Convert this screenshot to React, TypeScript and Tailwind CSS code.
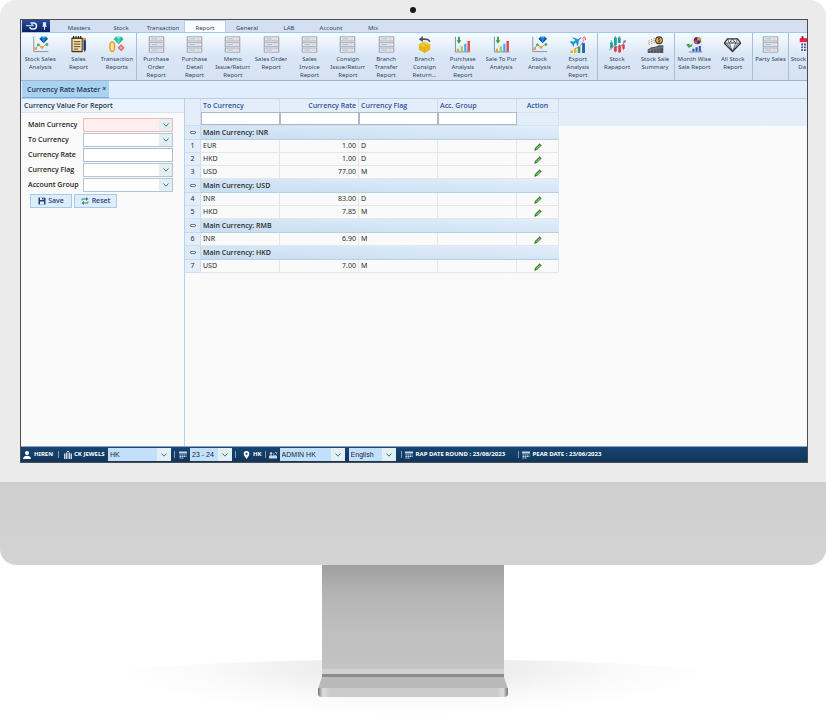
import React, { useState } from 'react';

type IconName =
  | 'stockSales'
  | 'notepad'
  | 'gems'
  | 'list'
  | 'box'
  | 'bars'
  | 'plane'
  | 'candles'
  | 'coins'
  | 'month'
  | 'diamond'
  | 'calendar';

interface ToolItem {
  label: string;
  icon: IconName;
}

const menus = ['Masters', 'Stock', 'Transaction', 'Report', 'General', 'LAB', 'Account', 'Mix'];

const toolGroups: { width: string; items: ToolItem[] }[] = [
  {
    width: 'w-[116px]',
    items: [
      { label: 'Stock Sales\nAnalysis', icon: 'stockSales' },
      { label: 'Sales\nReport', icon: 'notepad' },
      { label: 'Transaction\nReports', icon: 'gems' },
    ],
  },
  {
    width: 'w-[461px]',
    items: [
      { label: 'Purchase\nOrder\nReport', icon: 'list' },
      { label: 'Purchase\nDetail\nReport', icon: 'list' },
      { label: 'Memo\nIssue/Return\nReport', icon: 'list' },
      { label: 'Sales Order\nReport', icon: 'list' },
      { label: 'Sales\nInvoice\nReport', icon: 'list' },
      { label: 'Consign\nIssue/Return\nReport', icon: 'list' },
      { label: 'Branch\nTransfer\nReport', icon: 'list' },
      { label: 'Branch\nConsign\nReturn...', icon: 'box' },
      { label: 'Purchase\nAnalysis\nReport', icon: 'bars' },
      { label: 'Sale To Pur\nAnalysis', icon: 'bars' },
      { label: 'Stock\nAnalysis', icon: 'stockSales' },
      { label: 'Export\nAnalysis\nReport', icon: 'plane' },
    ],
  },
  {
    width: 'w-[77px]',
    items: [
      { label: 'Stock\nRapaport', icon: 'candles' },
      { label: 'Stock Sale\nSummary', icon: 'coins' },
    ],
  },
  {
    width: 'w-[78px]',
    items: [
      { label: 'Month Wise\nSale Report', icon: 'month' },
      { label: 'All Stock\nReport', icon: 'diamond' },
    ],
  },
  { width: 'w-[36px]', items: [{ label: 'Party Sales', icon: 'list' }] },
];

const rateGroups = [
  {
    currency: 'INR',
    rows: [
      { id: 1, to: 'EUR', rate: '1.00', flag: 'D' },
      { id: 2, to: 'HKD', rate: '1.00', flag: 'D' },
      { id: 3, to: 'USD', rate: '77.00', flag: 'M' },
    ],
  },
  {
    currency: 'USD',
    rows: [
      { id: 4, to: 'INR', rate: '83.00', flag: 'D' },
      { id: 5, to: 'HKD', rate: '7.85', flag: 'M' },
    ],
  },
  { currency: 'RMB', rows: [{ id: 6, to: 'INR', rate: '6.90', flag: 'M' }] },
  { currency: 'HKD', rows: [{ id: 7, to: 'USD', rate: '7.00', flag: 'M' }] },
];

const iconShapes: Record<IconName, React.ReactNode> = {
  stockSales: (
    <>
      <path d="M2.5 1v21H23" stroke="#7b899b" strokeWidth="1.2" fill="none" />
      <path d="M5 18l4-6 5 4 6-4" stroke="#8a97a8" strokeWidth="1.2" fill="none" />
      <circle cx="5" cy="18" r="2" fill="#f59a23" />
      <circle cx="9" cy="12.500" r="2" fill="#4caf50" />
      <circle cx="14" cy="16" r="2" fill="#f59a23" />
      <circle cx="21" cy="12" r="2" fill="#4caf50" />
      <path d="M13 1h7l2.500 3-6 6-6-6z" fill="#1565c0" />
      <path d="M13 1h7l-3.500 3z" fill="#29b6f6" />
      <path d="M10.500 4h12l-6 6z" fill="#0b4f9e" />
      <path d="M14 4h5l-2.500 6z" fill="#1e88e5" />
    </>
  ),
  notepad: (
    <>
      <rect x="2" y="2" width="16" height="21" rx="1" fill="#4a3419" />
      <rect x="3.500" y="4" width="13" height="17" fill="#f7dfa5" />
      <path d="M5 0v4M8.500 0v4M12 0v4M15 0v4" stroke="#222" strokeWidth="1.6" />
      <path d="M5.500 8h9M5.500 11.500h9M5.500 15h9M5.500 18.500h6" stroke="#4b3a20" strokeWidth="1.3" />
      <path d="M19 3h3.500v16l-1.700 4L19 19z" fill="#1e3a6e" />
      <path d="M19 3h3.500v3H19z" fill="#e29a2f" />
    </>
  ),
  gems: (
    <>
      <path d="M11 1h8l3 3.500-7 7-7-7z" fill="#25b99a" />
      <path d="M11 1h8l-4 3.500z" fill="#7fe3cd" />
      <path d="M12 4.500h6l-3 7z" fill="#4fd0b2" />
      <ellipse cx="6" cy="15" rx="4.500" ry="8" fill="#eda02f" />
      <ellipse cx="6" cy="15" rx="2.200" ry="5.500" fill="#ffe9ae" />
      <path d="M18.500 11.500l5 5-5 5-5-5z" fill="#e8606a" />
      <path d="M18.500 14l2.500 2.500-2.500 2.500-2.500-2.500z" fill="#f9a8ae" />
    </>
  ),
  list: (
    <>
      <path d="M1.500 1v22M22.500 1v22" stroke="#b3bac4" strokeWidth="1.300" />
      {[1, 9, 17].map(y => (
        <g key={y}>
          <rect x="2" y={y} width="20" height="6" fill="#e0e5ec" stroke="#a3abb6" strokeWidth="1.200" />
          <path d={`M5 ${y + 3}h8`} stroke="#a9b3bf" strokeWidth="1.200" />
          <circle cx="17.500" cy={y + 3} r="1.800" fill="#f5cfca" />
        </g>
      ))}
    </>
  ),
  box: (
    <>
      <path d="M12 8l8 3.500v8L12 24l-8-4.500v-8z" fill="#e9b91b" />
      <path d="M12 8l8 3.500-8 4-8-4z" fill="#f2cb3c" />
      <path d="M12 15.500V24M8 10l8 4" stroke="#d8a712" strokeWidth="1" />
      <path d="M19 8.500C19 5 16 4 8 4.500" stroke="#4b4f57" strokeWidth="2.200" fill="none" />
      <path d="M9.500 0v8.500L4 4.500z" fill="#4b4f57" />
    </>
  ),
  bars: (
    <>
      <path d="M2 1v21.500h21" stroke="#5f8a8b" strokeWidth="1.2" fill="none" />
      <path d="M7 1v6" stroke="#2e9e3f" strokeWidth="2.500" />
      <path d="M3.800 6h6.400L7 11z" fill="#2e9e3f" />
      <path d="M4 18h3v4H4z" fill="#f59a23" />
      <path d="M9.500 14.500h3V22h-3z" fill="#9ccc65" />
      <path d="M14.500 11h3v11h-3z" fill="#42a5f5" />
      <path d="M19 7h3.500v15H19z" fill="#e5484d" />
    </>
  ),
  plane: (
    <>
      <path d="M1 8l3-1 2 1 3-2-5-4h2l7 2.500L16 2l1.500-.3-.6 1.600-3 3L13 13l-1.500 1-1.500-5-3 2.500V14l-1 1-1.500-3.500z" fill="#2196d9" />
      <path d="M8 18c7-2 11-6 13.500-14" stroke="#e5606a" strokeWidth="1.300" fill="none" />
      <path d="M18.500 4.500L22 1l2 5" stroke="#e5484d" strokeWidth="1.300" fill="none" />
      <path d="M2 20.500h3.500V24H2z" fill="#e8b21c" />
      <path d="M7 18.500h3.500V24H7z" fill="#f2b425" />
      <path d="M12.500 15h3.500v9h-3.500z" fill="#43a047" />
      <path d="M18.500 10h4v14h-4z" fill="#1e63b5" />
    </>
  ),
  candles: (
    <>
      <path d="M3.500 6v13M9 0v17M14.500 0v10" stroke="#12a594" strokeWidth="1" />
      <path d="M1.500 9h4v8h-4zM7 2h4v11H7zM12.500 2h4v8h-4z" fill="#20a392" />
      <path d="M9 14v9M15 12v12M20.500 8v12" stroke="#d93644" strokeWidth="1" />
      <path d="M7 15h4v7H7zM13 13h4v10h-4zM18.700 12h3.500v6h-3.500z" fill="#e23b49" />
      <path d="M0 20l8-7 6 4 9-9" stroke="#8593a5" strokeWidth="1.4" fill="none" />
      <path d="M19.500 7l4.500-1.500-1 4.500z" fill="#717d8e" />
    </>
  ),
  coins: (
    <>
      <circle cx="17" cy="6" r="5.500" fill="#3b3b3b" />
      <circle cx="17" cy="6" r="4" fill="#f2b544" />
      <path d="M18.500 4c-2.500-1.500-4 1-1.500 2s1.500 3.500-1.500 2M17 2.500v7" stroke="#333" strokeWidth="0.9" fill="none" />
      <path d="M3 6v7M6.500 4.500v7M10 3v7" stroke="#b98a45" strokeWidth="1.600" strokeDasharray="1.500 1" />
      <path d="M1 24v-5l5-3 6-1 5-2 6 0v11z" fill="#55575c" />
      <path d="M1 21l8-3 6-1 8-1M5 18v6M9 17v7M13 16v8M17 15v9" stroke="#92959b" strokeWidth="0.800" fill="none" />
    </>
  ),
  month: (
    <>
      <path d="M8 1h15v22H8z" fill="#dfe7f5" />
      <circle cx="16" cy="6.500" r="5" fill="#243f7d" />
      <path d="M16 6.500v-5a5 5 0 0 1 5 5z" fill="#f59a23" />
      <path d="M16 6.500h-5a5 5 0 0 0 5 5z" fill="#e5484d" />
      <path d="M9 18h3v4H9zM13.500 16h3v6h-3zM18 14h3v8h-3z" fill="#285bb0" />
      <path d="M0 12l5-1v2c2 0 3-1 4-3 0 4-1 6-4 6v2z" fill="#43a047" />
      <path d="M4 22.500h19" stroke="#5f74a2" strokeWidth="1.200" />
    </>
  ),
  diamond: (
    <>
      <path d="M5 4h14l4.500 6L12 22 .5 10z" fill="#f4f7fa" stroke="#2d3035" strokeWidth="1.800" />
      <path d="M.5 10h23M5 4l2.500 6L12 22l4.500-12L19 4M7.500 10L12 4l4.500 6M4 10l8 12 8-12M9 7l3 3 3-3" stroke="#33363b" strokeWidth="1" fill="none" />
    </>
  ),
  calendar: (
    <>
      <path d="M1 3h22v6H1z" fill="#e5283c" />
      <path d="M5 0v5M19 0v5" stroke="#b51023" strokeWidth="2.500" />
      <path d="M1 9h22v13H1z" fill="#f4f6fb" />
      <path d="M3 12h18M3 16h18M3 20h18" stroke="#33509c" strokeWidth="2.500" strokeDasharray="2.600 1.400" />
    </>
  ),
};

const ToolIcon: React.FC<{ name: IconName }> = ({ name }) => (
  <svg viewBox="0 0 24 24" className="h-[17px] w-[17px] shrink-0" aria-hidden="true">
    {iconShapes[name]}
  </svg>
);

const Chevron: React.FC = () => (
  <svg viewBox="0 0 8 8" className="h-2 w-2" aria-hidden="true">
    <path d="M1.500 2.500L4 5.200l2.500-2.700" fill="none" stroke="#5a6b79" strokeWidth="1" />
  </svg>
);

const Ribbon: React.FC = () => {
  const [active, setActive] = useState('Report');

  return (
    <header>
      <nav className="flex h-[13px] border-b border-[#9fc8ef] bg-[#d4e0f1]">
        <button aria-label="Home" className="mr-2 ml-px flex w-7 items-center justify-center gap-1 bg-linear-to-b from-[#2b4c9b] to-[#0b2064]">
          <svg viewBox="0 0 24 16" className="h-2 w-3" aria-hidden="true">
            <path d="M9 2h6c8 0 8 12 0 12h-3c-3 0-4-2-4-4" fill="none" stroke="#e6efff" strokeWidth="3" />
            <path d="M0 7h13M11 4l4 4" stroke="#b4ccf4" strokeWidth="2.500" />
          </svg>
          <svg viewBox="0 0 8 12" className="h-2 w-[5px]" aria-hidden="true">
            <path d="M1.500 0h5v5l1.500 2H0l1.500-2zM3.200 7h1.600v5H3.200z" fill="#dfe9ff" />
          </svg>
        </button>
        {menus.map(menu => (
          <button
            key={menu}
            onClick={() => setActive(menu)}
            className={`flex w-[42px] shrink-0 items-end justify-center leading-2 ${
              active === menu ? 'border-x border-t border-[#b4cde8] bg-[#fafcff]' : ''
            }`}
          >
            {menu}
          </button>
        ))}
      </nav>
      <div className="flex h-12 overflow-hidden border-b border-[#9db3cc] bg-linear-to-b from-[#f7fbff] via-[#d9e6f6] to-[#d6e2f2]">
        {toolGroups.map((group, i) => (
          <div key={i} className={`flex shrink-0 border-r border-[#a9bfd8] ${group.width}`}>
            {group.items.map(item => (
              <button key={item.label} className="flex min-w-0 flex-1 flex-col items-center pt-[3px]">
                <ToolIcon name={item.icon} />
                <span className="mt-[2px] max-w-[35px] overflow-hidden text-center leading-2 whitespace-pre">
                  {item.label}
                </span>
              </button>
            ))}
          </div>
        ))}
        {/* last tool runs past the edge of the ribbon */}
        <button className="flex min-w-0 flex-1 flex-col overflow-hidden pt-[3px]">
          <span className="ml-[10px] flex">
            <ToolIcon name="calendar" />
          </span>
          <span className="mt-[2px] ml-px w-4 text-right leading-2 whitespace-pre">{'Stock\nDa'}</span>
        </button>
      </div>
    </header>
  );
};

const fields = [
  { id: 'main-currency', label: 'Main Currency', select: true, required: true },
  { id: 'to-currency', label: 'To Currency', select: true },
  { id: 'currency-rate', label: 'Currency Rate', select: false },
  { id: 'currency-flag', label: 'Currency Flag', select: true },
  { id: 'account-group', label: 'Account Group', select: true },
];

const CurrencyForm: React.FC = () => (
  <aside className="w-[164px] shrink-0 border-r border-[#b5d3ee] font-['Open_Sans','Noto_Sans',sans-serif]">
    <h2 className="h-[14px] border-b border-[#d3e3f4] bg-[#e9f2fd] pl-[3px] leading-[13px] font-semibold text-[#26323f]">
      Currency Value For Report
    </h2>
    <form className="pt-[5px] pl-[7px]" onSubmit={e => e.preventDefault()}>
      <div className="flex flex-col gap-px">
        {fields.map(field => (
          <div key={field.id} className="flex h-[14px] items-center">
            <label htmlFor={field.id} className="w-[55px] leading-3 font-semibold text-[#1b1b1b]">
              {field.label}
            </label>
            {field.select ? (
              <div className="relative h-[14px] w-[90px]">
                <select
                  id={field.id}
                  className={`block h-full w-full appearance-none border pl-1 ${
                    field.required ? 'border-[#f5b9b9] bg-[#ffefef]' : 'border-[#b2c4d6] bg-white'
                  }`}
                >
                  <option></option>
                </select>
                <span className="pointer-events-none absolute inset-y-px right-px flex w-[13px] items-center justify-center bg-[#e1eff2]">
                  <Chevron />
                </span>
              </div>
            ) : (
              <input id={field.id} className="h-[14px] w-[90px] border border-[#a9bccf] bg-white px-1" />
            )}
          </div>
        ))}
      </div>
      <div className="mt-[2px] ml-[2px] flex gap-[2px] font-semibold text-[#24466e]">
        <button type="submit" className="flex h-[14px] w-[42px] items-center justify-center gap-[2px] border border-[#a3cbf0] bg-[#deecfb]">
          <svg viewBox="0 0 16 16" className="h-2 w-2" aria-hidden="true">
            <path d="M1 1h12l2 2v12H1z" fill="#1d4677" />
            <path d="M4 1h7v5H4zM4 9h8v6H4z" fill="#e8f2fd" />
            <path d="M8 2h2v3H8z" fill="#1d4677" />
          </svg>
          Save
        </button>
        <button type="reset" className="flex h-[14px] w-[43px] items-center justify-center gap-[3px] border border-[#a3cbf0] bg-[#deecfb]">
          <svg viewBox="0 0 16 16" className="h-2 w-2" aria-hidden="true">
            <path d="M2 7V4h9M14 9v3H5" fill="none" stroke="#2f8f63" strokeWidth="2" />
            <path d="M10 0l5 4-5 4zM6 8l-5 4 5 4z" fill="#2f8f63" />
          </svg>
          Reset
        </button>
      </div>
    </form>
  </aside>
);

const columns = [
  { label: 'To Currency', align: 'text-left' },
  { label: 'Currency Rate', align: 'text-right' },
  { label: 'Currency Flag', align: 'text-left' },
  { label: 'Acc. Group', align: 'text-left' },
];

const cell = 'border-r border-b border-[#e3e6ea] px-[2px] py-0';

const RateTable: React.FC = () => (
  <div className="min-w-0 flex-1 bg-linear-to-b from-[#e4eefb] from-[27px] to-[#fafafa] to-[27px]">
    <table className="w-[374px] table-fixed border-separate border-spacing-0 leading-3 text-[#2b2b2b]">
      <colgroup>
        <col className="w-4" />
        <col className="w-[79px]" />
        <col className="w-[79px]" />
        <col className="w-[79px]" />
        <col className="w-[79px]" />
        <col className="w-[42px]" />
      </colgroup>
      <thead className="bg-[#e4eefb] font-['Open_Sans','Noto_Sans',sans-serif] text-[#29509a]">
        <tr className="h-[13px]">
          <th rowSpan={2} className="border-r border-b border-[#cfdded] p-0" aria-label="Row"></th>
          {columns.map(col => (
            <th key={col.label} className={`border-r border-[#cfdded] px-[2px] py-0 font-semibold ${col.align}`}>
              {col.label}
            </th>
          ))}
          <th className="border-r border-[#cfdded] p-0 text-center font-semibold">Action</th>
        </tr>
        <tr className="h-[14px]">
          {columns.map(col => (
            <td key={col.label} className="border-b border-[#cfdded] p-0">
              <input aria-label={`Filter ${col.label}`} className="block h-[13px] w-full border border-[#a9bacb] bg-white px-[2px]" />
            </td>
          ))}
          <td className="border-t border-r border-b border-[#d5e1ef] p-0"></td>
        </tr>
      </thead>
      <tbody>
        {rateGroups.map(group => (
          <React.Fragment key={group.currency}>
            <tr className="h-[14px] bg-linear-to-tr from-[#c5dcf1] to-[#e2eefa]">
              <td className="border-r border-b border-[#c3d9ee] bg-[#dbe9f8] p-0">
                <button aria-label={`Collapse ${group.currency}`} className="mx-auto block h-[3px] w-[6px] rounded-[1px] border border-[#6d7c8c] bg-white"></button>
              </td>
              <td colSpan={5} className="border-b border-[#b9cfe4] px-[2px] py-0 font-['Open_Sans','Noto_Sans',sans-serif] font-semibold">
                Main Currency: {group.currency}
              </td>
            </tr>
            {group.rows.map(row => (
              <tr key={row.id} className="h-[13px]">
                <td className="border-r border-b border-[#cddff0] bg-[#e4eefb] p-0 text-center">{row.id}</td>
                <td className={cell}>{row.to}</td>
                <td className={`${cell} text-right`}>{row.rate}</td>
                <td className={cell}>{row.flag}</td>
                <td className={cell}></td>
                <td className={cell}>
                  <button aria-label={`Edit row ${row.id}`} className="mx-auto flex h-3 items-end pb-px">
                    <svg viewBox="0 0 16 16" className="h-2 w-2" aria-hidden="true">
                      <path d="M1 15l1-5 9-9 4 4-9 9z" fill="#3a7d3a" />
                      <path d="M4 11l7-7 1.500 1.500-7 7z" fill="#7ed957" />
                      <path d="M11 1l4 4-1.300 1.300-4-4z" fill="#5f6d62" />
                      <path d="M1 15l.6-2.600 2 2z" fill="#333" />
                    </svg>
                  </button>
                </td>
              </tr>
            ))}
          </React.Fragment>
        ))}
      </tbody>
    </table>
  </div>
);

const StatusSelect: React.FC<{ label: string; value: string; width: string }> = ({ label, value, width }) => (
  <div className={`relative h-[13px] shrink-0 ${width}`}>
    <select
      aria-label={label}
      className="block h-full w-full appearance-none bg-[#c2dffb] pl-[2px] font-['Liberation_Sans',sans-serif] text-[7px] leading-[13px] font-normal text-[#1c2733]"
    >
      <option>{value}</option>
    </select>
    <span className="pointer-events-none absolute inset-y-0 right-0 flex w-[14px] items-center justify-center bg-[#e1f0f5]">
      <Chevron />
    </span>
  </div>
);

const Divider: React.FC = () => <span className="h-[7px] w-px shrink-0 bg-[#7f9bb5]"></span>;

const CalendarGlyph: React.FC = () => (
  <svg viewBox="0 0 16 16" className="h-2 w-2 shrink-0" aria-hidden="true">
    <path d="M0 1h16v4H0z" fill="#c8d6e4" />
    <path d="M1 8h14M1 11h14M1 14h9" stroke="#c8d6e4" strokeWidth="2" strokeDasharray="3 1" />
  </svg>
);

const StatusBar: React.FC = () => (
  <footer className="flex h-4 items-center overflow-hidden border-t border-[#8ea5bb] bg-linear-to-b from-[#154573] to-[#12365b] pl-[2px] font-bold whitespace-nowrap text-white">
    <div className="flex w-[35px] shrink-0 items-center gap-[3px]">
      <svg viewBox="0 0 16 16" className="h-2 w-2 shrink-0" aria-hidden="true">
        <circle cx="8" cy="4" r="4" fill="#fff" />
        <path d="M0 16c0-9 16-9 16 0z" fill="#fff" />
      </svg>
      HIREN
    </div>
    <Divider />
    <div className="mr-px ml-[5px] flex w-[43px] shrink-0 items-center gap-[2px]">
      <svg viewBox="0 0 16 16" className="h-2 w-2 shrink-0" aria-hidden="true">
        <path d="M0 5h3v11H0zM4 3h3v13H4zM9 3h3v13H9zM13 5h3v11h-3zM6 0h4v2H6z" fill="#c8d6e4" />
      </svg>
      CK JEWELS
    </div>
    <StatusSelect label="Company" value="HK" width="w-[63px]" />
    <div className="mr-[3px] ml-[3px] flex shrink-0 items-center gap-1">
      <Divider />
      <CalendarGlyph />
    </div>
    <StatusSelect label="Year" value="23 - 24" width="w-[42px]" />
    <div className="mr-[3px] ml-[3px] flex shrink-0 items-center gap-[3px]">
      <Divider />
      <span className="w-px"></span>
      <svg viewBox="0 0 16 20" className="h-2 w-[7px]" aria-hidden="true">
        <path d="M8 0a7 7 0 0 1 7 7c0 5-7 13-7 13S1 12 1 7a7 7 0 0 1 7-7z" fill="#fff" />
        <circle cx="8" cy="7" r="2.800" fill="#154573" />
      </svg>
      HK
      <Divider />
      <svg viewBox="0 0 16 16" className="h-2 w-2" aria-hidden="true">
        <path d="M0 10h16v5H0z" fill="#c8d6e4" />
        <circle cx="4" cy="5" r="2.500" fill="#c8d6e4" />
        <path d="M1 9h6M8 6h3M12 3h3v3M8 9h7" stroke="#c8d6e4" strokeWidth="1.500" fill="none" />
      </svg>
    </div>
    <StatusSelect label="User" value="ADMIN HK" width="w-[65px]" />
    <span className="w-1 shrink-0"></span>
    <StatusSelect label="Language" value="English" width="w-[47px]" />
    <div className="ml-[5px] flex w-[117px] shrink-0 items-center gap-[3px]">
      <Divider />
      <CalendarGlyph />
      <span>RAP DATE ROUND : 23/06/2023</span>
    </div>
    <div className="flex shrink-0 items-center gap-[3px]">
      <Divider />
      <CalendarGlyph />
      <span>PEAR DATE : 23/06/2023</span>
    </div>
  </footer>
);

const Stand: React.FC = () => (
  <svg viewBox="0 0 826 161" className="block w-full" aria-hidden="true">
    <defs>
      <linearGradient id="neck" x1="0" y1="0" x2="0" y2="1">
        <stop offset="0" stopColor="#9f9f9f" />
        <stop offset="0.250" stopColor="#b3b3b3" />
        <stop offset="0.600" stopColor="#bfbfbf" />
        <stop offset="1" stopColor="#c4c4c4" />
      </linearGradient>
      <linearGradient id="foot" x1="0" y1="0" x2="1" y2="0">
        <stop offset="0" stopColor="#767676" />
        <stop offset="0.025" stopColor="#dcdcdc" />
        <stop offset="0.060" stopColor="#cbcbcb" />
        <stop offset="0.940" stopColor="#cbcbcb" />
        <stop offset="0.975" stopColor="#dcdcdc" />
        <stop offset="1" stopColor="#767676" />
      </linearGradient>
      <radialGradient id="floor" gradientUnits="userSpaceOnUse" cx="413" cy="100" r="300" gradientTransform="matrix(1 0 0 0.170 0 83)">
        <stop offset="0" stopColor="#e6e6e6" />
        <stop offset="0.400" stopColor="#f0f0f0" />
        <stop offset="0.700" stopColor="#fafafa" />
        <stop offset="1" stopColor="#fff" />
      </radialGradient>
    </defs>
    <path d="M113 104Q260 94 413 94t300 10v50H113z" fill="url(#floor)" />
    <path d="M322 0h182v110H322z" fill="url(#neck)" />
    <path d="M322 104h182v5H322z" fill="#d2d2d2" />
    <path d="M322 109h182v3H322z" fill="#8b8b8b" />
    <path d="M322 112h182l4 12H318z" fill="#b9b9b9" />
    <path d="M318 123h190v6q0 3-4 3H322q-4 0-4-3z" fill="url(#foot)" />
  </svg>
);

const App: React.FC = () => (
  <main className="min-h-screen bg-white font-['Noto_Sans','Open_Sans',sans-serif] text-[6px] text-[#2f4763]">
    <div className="rounded-t-2xl bg-[#ebebeb] px-[18px] pb-[19px]">
      <div className="flex h-[19px] items-center justify-center">
        <span className="h-[6px] w-[6px] rounded-full bg-[#1a1a1a]"></span>
      </div>
      <div className="ml-[2px] border border-[#4b4b50] bg-[#fafafa]">
        <Ribbon />
        <div className="flex h-[18px] border-b border-[#b8cfe6] bg-[#e1edfa]">
          <div className="ml-px flex items-center gap-[2px] border-b border-[#78aede] bg-[#a9d1f2] pt-[2px] pr-[3px] pl-[5px] font-['Open_Sans','Noto_Sans',sans-serif] text-[7px] font-semibold text-[#1f3347]">
            Currency Rate Master
            <button aria-label="Close tab" className="pb-[2px] leading-2">×</button>
          </div>
        </div>
        <div className="flex min-h-[347px] text-[7px]">
          <CurrencyForm />
          <RateTable />
        </div>
        <StatusBar />
      </div>
    </div>
    <div className="h-[83px] rounded-b-2xl bg-linear-to-b from-[#cecece] to-[#d3d3d3]"></div>
    <Stand />
  </main>
);

export default App;
